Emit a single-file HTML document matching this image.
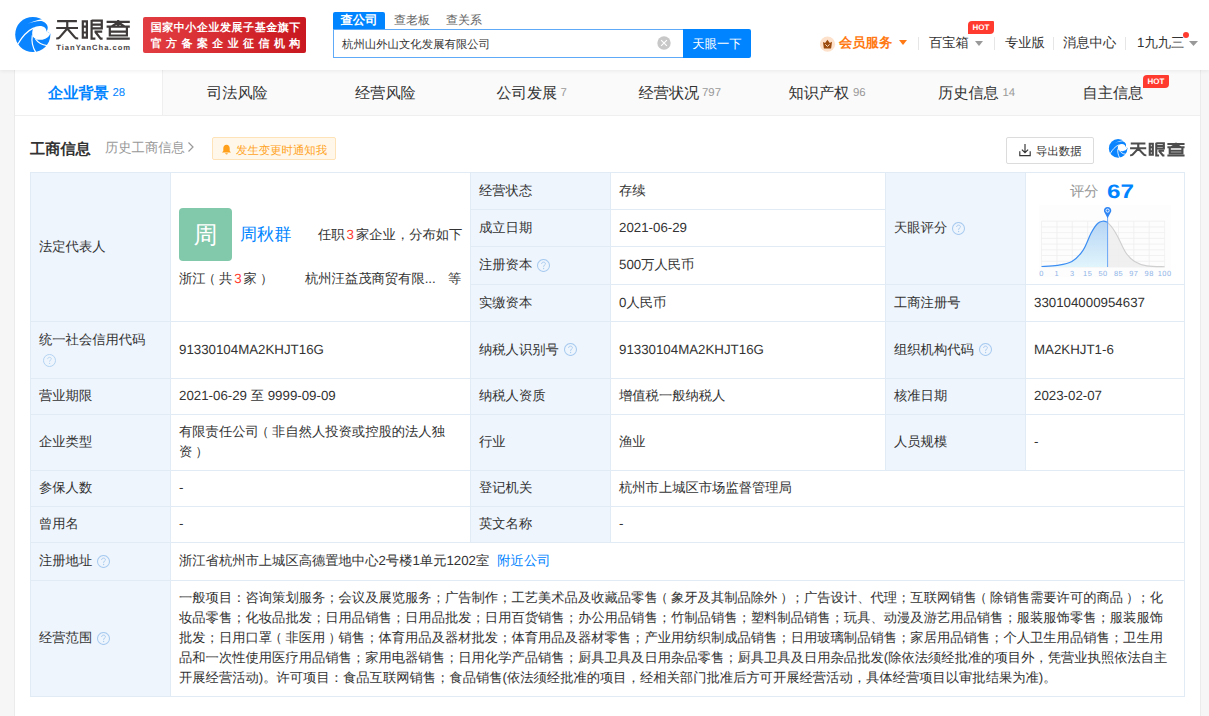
<!DOCTYPE html>
<html><head><meta charset="utf-8">
<style>
*{box-sizing:border-box;margin:0;padding:0}
html,body{text-rendering:geometricPrecision;width:1209px;height:716px;overflow:hidden;background:#f6f6f6;font-family:"Liberation Sans",sans-serif;color:#333}
.a{position:absolute;white-space:nowrap}
i{font-style:normal}
#hdr{position:absolute;z-index:10;left:0;top:0;width:1209px;height:70px;background:#fff;box-shadow:0 1px 4px rgba(0,0,0,0.07)}
#card{position:absolute;left:14px;top:70px;width:1187px;height:660px;background:#fff;border-left:1px solid #ebebeb;border-right:1px solid #ebebeb}
.tabs{position:absolute;left:15px;top:70px;width:1185px;height:46px;background:#fafafa;border-bottom:1px solid #efefef}
.tt{top:82.5px;font-size:15.2px;line-height:22px;color:#333}
.tn{top:85px;font-size:11.4px;line-height:16px;color:#999}
.hot{background:#ff3b30;border-radius:4px 1px 4px 0;color:#fff;font-size:8px;font-weight:bold;text-align:center}
.c{position:absolute;border:1px solid #e1ebf5;display:flex;align-items:center;font-size:13.3px;color:#333;padding-left:8px;padding-bottom:1px;line-height:20px}
.l{background:#eef5fd}
.qi{margin-left:5px;vertical-align:-2.5px}
.lp{position:relative;left:-3px}.rp{position:relative;left:3px}
</style></head><body>
<div id="hdr">
 <svg class="a" style="left:13px;top:15px" width="40" height="40" viewBox="0 0 40 40">
  <circle cx="19.8" cy="19.5" r="17.6" fill="#0a84ff"/>
  <path d="M28.9 4.3 L44 -4 L44 18.5 L37.3 18.5 L33.7 16.6 C35.4 13.5 35 10.3 32.6 8.3 C31 7 29.6 6.4 28.3 6.1 C23.5 5.9 18.5 7.5 14.2 8.9 C18.5 6.8 23.5 5.3 28.9 4.3 Z" fill="#fff"/>
  <path d="M20.5 12.9 C23.5 10.8 29.3 10.2 32.2 13 C33.1 14 33.5 15.4 33.7 16.6 L37.3 18.5 C35.8 22.5 32.2 24.6 27.8 24.8 C25.6 24.9 23.9 24.5 22.7 23.9 C20.7 22.8 19.3 21.2 19.2 19.2 C19.1 16.8 19.6 14.2 20.5 12.9 Z" fill="#fff"/>
  <path d="M4.8 29.2 C8.8 22.2 13.8 16.2 20.8 12.9" stroke="#fff" stroke-width="1.25" fill="none"/>
  <path d="M19.3 20.3 C18.5 25.2 19.4 32 22.9 37.6" stroke="#fff" stroke-width="1.2" fill="none"/>
  <path d="M22.5 24 C25 27.6 29 30 34 30.6" stroke="#fff" stroke-width="1.3" fill="none"/>
 </svg>
 <svg class="a" style="left:0;top:0" width="140" height="60" viewBox="0 0 140 60">
  <g stroke="#3e3a39" stroke-width="2.2" fill="none" stroke-linecap="butt">
   <path d="M57.1 21.1 H76.9 M56.2 28 H78 M67.25 20.2 V28.5 L59.6 37.4 Q58.8 38.5 56.2 38.5 M67.25 28.5 L74.9 37.4 Q75.7 38.5 78.2 38.5"/>
   <path d="M82.8 21.4 H86.9 V37.6 H82.8 Z M82.8 26.6 H86.9 M82.8 32.5 H86.9"/>
   <path d="M91.6 20 V38.6 H95.4 M91.6 20.6 H101.8 V28.4 H91.6 M91.6 24.6 H101.8 M94.5 31.6 H102.2 M95.3 31.8 L100.6 38.6 H102.6"/>
   <path d="M106.6 21.8 H129.8 M106.6 26.7 H129.8 M118.2 20 V26 M117.6 22.6 L111.3 26.6 M118.8 22.6 L124.8 26.6 M109.8 26.7 V35.5 H126.9 V26.7 M109.8 31.6 H126.9 M106.6 38.7 H129.8"/>
  </g>
  <text x="56.3" y="49.9" textLength="73.7" lengthAdjust="spacing" font-family="Liberation Sans" font-weight="bold" font-size="7.6" fill="#4a4545">TianYanCha.com</text>
 </svg>
 <div class="a" style="left:143px;top:17px;width:163px;height:36px;border-radius:2px;background:linear-gradient(90deg,#e23d42,#c9181f)"></div>
 <div class="a" style="left:150.7px;top:20px;font-size:11px;line-height:16px;font-weight:bold;color:#fff;letter-spacing:0.55px">国家中小企业发展子基金旗下</div>
 <div class="a" style="left:150.7px;top:35.7px;font-size:11px;line-height:16px;font-weight:bold;color:#fff;letter-spacing:4.4px">官方备案企业征信机构</div>

 <div class="a" style="left:333px;top:12px;width:52px;height:17px;background:#0084ff;border-radius:2px 2px 0 0;color:#fff;font-size:12.35px;font-weight:bold;line-height:17px;text-align:center">查公司</div>
 <div class="a" style="left:394px;top:12px;font-size:12px;line-height:17px;color:#666">查老板</div>
 <div class="a" style="left:446px;top:12px;font-size:12px;line-height:17px;color:#666">查关系</div>
 <div class="a" style="left:333px;top:29px;width:351px;height:29px;border:1px solid #5eaaf8;border-right:0;background:#fff"></div>
 <div class="a" style="left:342px;top:36px;font-size:11.4px;line-height:18px;color:#333">杭州山外山文化发展有限公司</div>
 <svg class="a" style="left:657px;top:36px" width="14" height="14" viewBox="0 0 14 14"><circle cx="7" cy="7" r="6.7" fill="#c8c8c8"/><path d="M4.1 4.1 L9.9 9.9 M9.9 4.1 L4.1 9.9" stroke="#fff" stroke-width="1.1"/></svg>
 <div class="a" style="left:683px;top:29px;width:68px;height:29px;background:#0084ff;border-radius:0 2px 2px 0;color:#fff;font-size:12.35px;line-height:31px;text-align:center">天眼一下</div>

 <svg class="a" style="left:820px;top:36px" width="16" height="16" viewBox="0 0 16 16"><circle cx="7.5" cy="8.2" r="7.6" fill="#fde1ca"/><path d="M3 5.9 L5.1 6.9 L7.4 3.7 L9.8 6.9 L12 5.8 L11.2 12.1 Q11.1 12.6 10.6 12.6 L4.4 12.6 Q3.9 12.6 3.8 12.1 Z" fill="#9a4a0c"/><path d="M5.4 8.3 L7.4 10.4 L9.6 8.4" stroke="#fde1ca" stroke-width="1" fill="none"/></svg>
 <div class="a" style="left:839px;top:34px;font-size:13.3px;line-height:18px;font-weight:bold;color:#ff7a14">会员服务</div>
 <svg class="a" style="left:899px;top:40px" width="8" height="6" viewBox="0 0 8 6"><path d="M0 0 L8 0 L4 5 Z" fill="#ff7a14"/></svg>
 <div class="a" style="left:918px;top:37px;width:1px;height:13px;background:#e6e6e6"></div>
 <div class="a" style="left:929px;top:34px;font-size:13.3px;line-height:18px;color:#333">百宝箱</div>
 <svg class="a" style="left:975px;top:41px" width="8" height="6" viewBox="0 0 8 6"><path d="M0 0 L8 0 L4 5 Z" fill="#999"/></svg>
 <div class="a hot" style="left:968px;top:21px;width:26px;height:13px;line-height:13px">HOT</div>
 <div class="a" style="left:994px;top:37px;width:1px;height:13px;background:#e6e6e6"></div>
 <div class="a" style="left:1005px;top:34px;font-size:13.3px;line-height:18px;color:#333">专业版</div>
 <div class="a" style="left:1053px;top:37px;width:1px;height:13px;background:#e6e6e6"></div>
 <div class="a" style="left:1063px;top:34px;font-size:13.3px;line-height:18px;color:#333">消息中心</div>
 <div class="a" style="left:1125px;top:37px;width:1px;height:13px;background:#e6e6e6"></div>
 <div class="a" style="left:1137px;top:34px;font-size:13.3px;line-height:18px;color:#333">1九九三</div>
 <div class="a" style="left:1183px;top:32px;width:6px;height:6px;border-radius:50%;background:#ff3b30"></div>
 <svg class="a" style="left:1189px;top:41px" width="9" height="6" viewBox="0 0 9 6"><path d="M0 0 L9 0 L4.5 5 Z" fill="#999"/></svg>
</div>
<div id="card"></div>
<div class="tabs"></div>
<div class="a" style="left:15px;top:70px;width:148px;height:45px;background:#fff;border-right:1px solid #efefef"></div>
<div class="a tt" style="left:48px;font-weight:bold;color:#0084ff">企业背景</div><div class="a tn" style="left:112.5px;color:#0084ff">28</div>
<div class="a tt" style="left:207px">司法风险</div>
<div class="a tt" style="left:355px">经营风险</div>
<div class="a tt" style="left:496.5px">公司发展</div><div class="a tn" style="left:560.5px">7</div>
<div class="a tt" style="left:638.5px">经营状况</div><div class="a tn" style="left:702px">797</div>
<div class="a tt" style="left:788.5px">知识产权</div><div class="a tn" style="left:853px">96</div>
<div class="a tt" style="left:938px">历史信息</div><div class="a tn" style="left:1002.5px">14</div>
<div class="a tt" style="left:1082.5px">自主信息</div>
<div class="a hot" style="left:1143px;top:75px;width:26px;height:13px;line-height:13px">HOT</div>


<!-- TABLE -->
<div class="a" style="left:30px;top:139px;font-size:15.2px;line-height:22px;font-weight:bold;color:#333">工商信息</div>
<div class="a" style="left:105px;top:138px;font-size:13.3px;line-height:20px;color:#999">历史工商信息<svg width="8" height="12" viewBox="0 0 8 12" style="margin-left:2px;vertical-align:-1px"><path d="M1.5 1.5 L6 6 L1.5 10.5" stroke="#999" stroke-width="1.2" fill="none"/></svg></div>
<div class="a" style="left:212px;top:137px;width:124px;height:23px;background:#fff8ea;border:1px solid #ffe3b8;border-radius:2px"></div>
<svg class="a" style="left:221px;top:144px" width="11" height="11" viewBox="0 0 11 11"><path d="M5.5 0.8 C3.2 0.8 2.3 2.6 2.3 4.5 L2.3 7 L1 8.4 L10 8.4 L8.7 7 L8.7 4.5 C8.7 2.6 7.8 0.8 5.5 0.8 Z M4.2 9.2 C4.3 10 4.8 10.4 5.5 10.4 C6.2 10.4 6.7 10 6.8 9.2 Z" fill="#ff9f1a"/></svg>
<div class="a" style="left:236px;top:142px;font-size:11.4px;line-height:18px;color:#ffa31f">发生变更时通知我</div>
<div class="a" style="left:1006px;top:137px;width:88px;height:27px;border:1px solid #dcdcdc;border-radius:2px;background:#fff"></div>
<svg class="a" style="left:1018px;top:143px" width="14" height="14" viewBox="0 0 14 14"><path d="M7 1 V9.6 M3.9 6.6 L7 9.7 L10.1 6.6 M1.8 8.2 V12.6 H12.2 V8.2" stroke="#333" stroke-width="1.15" fill="none"/></svg>
<div class="a" style="left:1036px;top:142.5px;font-size:11.4px;line-height:18px;color:#333">导出数据</div>
<svg class="a" style="left:1105px;top:136px" width="85" height="26" viewBox="0 0 85 26">
 <g transform="translate(2.7,2.1) scale(0.528)"><circle cx="19.8" cy="19.5" r="17.6" fill="#0a84ff"/>
  <path d="M28.9 4.3 L44 -4 L44 18.5 L37.3 18.5 L33.7 16.6 C35.4 13.5 35 10.3 32.6 8.3 C31 7 29.6 6.4 28.3 6.1 C23.5 5.9 18.5 7.5 14.2 8.9 C18.5 6.8 23.5 5.3 28.9 4.3 Z" fill="#fff"/>
  <path d="M20.5 12.9 C23.5 10.8 29.3 10.2 32.2 13 C33.1 14 33.5 15.4 33.7 16.6 L37.3 18.5 C35.8 22.5 32.2 24.6 27.8 24.8 C25.6 24.9 23.9 24.5 22.7 23.9 C20.7 22.8 19.3 21.2 19.2 19.2 C19.1 16.8 19.6 14.2 20.5 12.9 Z" fill="#fff"/>
  <path d="M4.8 29.2 C8.8 22.2 13.8 16.2 20.8 12.9" stroke="#fff" stroke-width="1.6" fill="none"/>
  <path d="M19.3 20.3 C18.5 25.2 19.4 32 22.9 37.6" stroke="#fff" stroke-width="1.6" fill="none"/>
  <path d="M22.5 24 C25 27.6 29 30 34 30.6" stroke="#fff" stroke-width="1.6" fill="none"/></g>
 <g transform="translate(-16.5,-6.8) scale(0.74,0.68)" stroke="#4d4d4d" stroke-width="2.9" fill="none">
   <path d="M57.1 21.1 H76.9 M56.2 28 H78 M67.25 20.2 V28.5 L59.6 37.4 Q58.8 38.5 56.2 38.5 M67.25 28.5 L74.9 37.4 Q75.7 38.5 78.2 38.5"/>
   <path d="M82.8 21.4 H86.9 V37.6 H82.8 Z M82.8 26.6 H86.9 M82.8 32.5 H86.9"/>
   <path d="M91.6 20 V38.6 H95.4 M91.6 20.6 H101.8 V28.4 H91.6 M91.6 24.6 H101.8 M94.5 31.6 H102.2 M95.3 31.8 L100.6 38.6 H102.6"/>
   <path d="M106.6 21.8 H129.8 M106.6 26.7 H129.8 M118.2 20 V26 M117.6 22.6 L111.3 26.6 M118.8 22.6 L124.8 26.6 M109.8 26.7 V35.5 H126.9 V26.7 M109.8 31.6 H126.9 M106.6 38.7 H129.8"/>
 </g>
</svg>
<div id="tbl">
<div class="c l" style="left:30px;top:172px;width:141px;height:150px;">法定代表人</div>
<div class="c" style="left:170px;top:172px;width:301px;height:150px;"></div>
<div class="c l" style="left:470px;top:172px;width:141px;height:38px;">经营状态</div>
<div class="c" style="left:610px;top:172px;width:276px;height:38px;">存续</div>
<div class="c l" style="left:470px;top:209px;width:141px;height:38px;">成立日期</div>
<div class="c" style="left:610px;top:209px;width:276px;height:38px;">2021-06-29</div>
<div class="c l" style="left:470px;top:246px;width:141px;height:39px;">注册资本<svg class="qi" width="13" height="13" viewBox="0 0 13 13"><circle cx="6.5" cy="6.5" r="6" fill="none" stroke="#a9cbef" stroke-width="1.05"/><path d="M4.6 5 C4.6 3.8 5.4 3.1 6.5 3.1 C7.6 3.1 8.4 3.8 8.4 4.8 C8.4 6 6.6 6.2 6.6 7.8" fill="none" stroke="#a9cbef" stroke-width="1"/><circle cx="6.6" cy="9.5" r="0.65" fill="#a9cbef"/></svg></div>
<div class="c" style="left:610px;top:246px;width:276px;height:39px;">500万人民币</div>
<div class="c l" style="left:470px;top:284px;width:141px;height:38px;">实缴资本</div>
<div class="c" style="left:610px;top:284px;width:276px;height:38px;">0人民币</div>
<div class="c l" style="left:885px;top:172px;width:141px;height:113px;">天眼评分<svg class="qi" width="13" height="13" viewBox="0 0 13 13"><circle cx="6.5" cy="6.5" r="6" fill="none" stroke="#a9cbef" stroke-width="1.05"/><path d="M4.6 5 C4.6 3.8 5.4 3.1 6.5 3.1 C7.6 3.1 8.4 3.8 8.4 4.8 C8.4 6 6.6 6.2 6.6 7.8" fill="none" stroke="#a9cbef" stroke-width="1"/><circle cx="6.6" cy="9.5" r="0.65" fill="#a9cbef"/></svg></div>
<div class="c" style="left:1025px;top:172px;width:160px;height:113px;"></div>
<div class="c l" style="left:885px;top:284px;width:141px;height:38px;">工商注册号</div>
<div class="c" style="left:1025px;top:284px;width:160px;height:38px;">330104000954637</div>
<div class="c l" style="left:30px;top:321px;width:141px;height:58px;"><div style="line-height:20px;margin-top:0">统一社会信用代码<br><svg class="qi" style="margin-left:4px;vertical-align:-3px" width="13" height="13" viewBox="0 0 13 13"><circle cx="6.5" cy="6.5" r="6" fill="none" stroke="#b3d2f0" stroke-width="1"/><path d="M4.7 5.1 C4.7 3.9 5.5 3.3 6.5 3.3 C7.5 3.3 8.3 3.9 8.3 4.9 C8.3 6 6.6 6.2 6.6 7.6" fill="none" stroke="#b3d2f0" stroke-width="0.9"/><circle cx="6.6" cy="9.3" r="0.6" fill="#b3d2f0"/></svg></div></div>
<div class="c" style="left:170px;top:321px;width:301px;height:58px;">91330104MA2KHJT16G</div>
<div class="c l" style="left:470px;top:321px;width:141px;height:58px;">纳税人识别号<svg class="qi" width="13" height="13" viewBox="0 0 13 13"><circle cx="6.5" cy="6.5" r="6" fill="none" stroke="#a9cbef" stroke-width="1.05"/><path d="M4.6 5 C4.6 3.8 5.4 3.1 6.5 3.1 C7.6 3.1 8.4 3.8 8.4 4.8 C8.4 6 6.6 6.2 6.6 7.8" fill="none" stroke="#a9cbef" stroke-width="1"/><circle cx="6.6" cy="9.5" r="0.65" fill="#a9cbef"/></svg></div>
<div class="c" style="left:610px;top:321px;width:276px;height:58px;">91330104MA2KHJT16G</div>
<div class="c l" style="left:885px;top:321px;width:141px;height:58px;">组织机构代码<svg class="qi" width="13" height="13" viewBox="0 0 13 13"><circle cx="6.5" cy="6.5" r="6" fill="none" stroke="#a9cbef" stroke-width="1.05"/><path d="M4.6 5 C4.6 3.8 5.4 3.1 6.5 3.1 C7.6 3.1 8.4 3.8 8.4 4.8 C8.4 6 6.6 6.2 6.6 7.8" fill="none" stroke="#a9cbef" stroke-width="1"/><circle cx="6.6" cy="9.5" r="0.65" fill="#a9cbef"/></svg></div>
<div class="c" style="left:1025px;top:321px;width:160px;height:58px;">MA2KHJT1-6</div>
<div class="c l" style="left:30px;top:378px;width:141px;height:37px;">营业期限</div>
<div class="c" style="left:170px;top:378px;width:301px;height:37px;">2021-06-29 至 9999-09-09</div>
<div class="c l" style="left:470px;top:378px;width:141px;height:37px;">纳税人资质</div>
<div class="c" style="left:610px;top:378px;width:276px;height:37px;">增值税一般纳税人</div>
<div class="c l" style="left:885px;top:378px;width:141px;height:37px;">核准日期</div>
<div class="c" style="left:1025px;top:378px;width:160px;height:37px;">2023-02-07</div>
<div class="c l" style="left:30px;top:414px;width:141px;height:57px;">企业类型</div>
<div class="c" style="left:170px;top:414px;width:301px;height:57px;"><div>有限责任公司<i class="lp">（</i>非自然人投资或控股的法人独<br>资<i class="rp">）</i></div></div>
<div class="c l" style="left:470px;top:414px;width:141px;height:57px;">行业</div>
<div class="c" style="left:610px;top:414px;width:276px;height:57px;">渔业</div>
<div class="c l" style="left:885px;top:414px;width:141px;height:57px;">人员规模</div>
<div class="c" style="left:1025px;top:414px;width:160px;height:57px;">-</div>
<div class="c l" style="left:30px;top:470px;width:141px;height:37px;">参保人数</div>
<div class="c" style="left:170px;top:470px;width:301px;height:37px;">-</div>
<div class="c l" style="left:470px;top:470px;width:141px;height:37px;">登记机关</div>
<div class="c" style="left:610px;top:470px;width:575px;height:37px;">杭州市上城区市场监督管理局</div>
<div class="c l" style="left:30px;top:506px;width:141px;height:37px;">曾用名</div>
<div class="c" style="left:170px;top:506px;width:301px;height:37px;">-</div>
<div class="c l" style="left:470px;top:506px;width:141px;height:37px;">英文名称</div>
<div class="c" style="left:610px;top:506px;width:575px;height:37px;">-</div>
<div class="c l" style="left:30px;top:542px;width:141px;height:39px;">注册地址<svg class="qi" width="13" height="13" viewBox="0 0 13 13"><circle cx="6.5" cy="6.5" r="6" fill="none" stroke="#a9cbef" stroke-width="1.05"/><path d="M4.6 5 C4.6 3.8 5.4 3.1 6.5 3.1 C7.6 3.1 8.4 3.8 8.4 4.8 C8.4 6 6.6 6.2 6.6 7.8" fill="none" stroke="#a9cbef" stroke-width="1"/><circle cx="6.6" cy="9.5" r="0.65" fill="#a9cbef"/></svg></div>
<div class="c" style="left:170px;top:542px;width:1015px;height:39px;">浙江省杭州市上城区高德置地中心2号楼1单元1202室<span style="color:#0084ff;margin-left:8px">附近公司</span></div>
<div class="c l" style="left:30px;top:580px;width:141px;height:117px;">经营范围<svg class="qi" width="13" height="13" viewBox="0 0 13 13"><circle cx="6.5" cy="6.5" r="6" fill="none" stroke="#a9cbef" stroke-width="1.05"/><path d="M4.6 5 C4.6 3.8 5.4 3.1 6.5 3.1 C7.6 3.1 8.4 3.8 8.4 4.8 C8.4 6 6.6 6.2 6.6 7.8" fill="none" stroke="#a9cbef" stroke-width="1"/><circle cx="6.6" cy="9.5" r="0.65" fill="#a9cbef"/></svg></div>
<div class="c" style="left:170px;top:580px;width:1015px;height:117px;"><div>一般项目：咨询策划服务；会议及展览服务；广告制作；工艺美术品及收藏品零售<i class="lp">（</i>象牙及其制品除外<i class="rp">）</i>；广告设计、代理；互联网销售<i class="lp">（</i>除销售需要许可的商品<i class="rp">）</i>；化<br>妆品零售；化妆品批发；日用品销售；日用品批发；日用百货销售；办公用品销售；竹制品销售；塑料制品销售；玩具、动漫及游艺用品销售；服装服饰零售；服装服饰<br>批发；日用口罩<i class="lp">（</i>非医用<i class="rp">）</i>销售；体育用品及器材批发；体育用品及器材零售；产业用纺织制成品销售；日用玻璃制品销售；家居用品销售；个人卫生用品销售；卫生用<br>品和一次性使用医疗用品销售；家用电器销售；日用化学产品销售；厨具卫具及日用杂品零售；厨具卫具及日用杂品批发(除依法须经批准的项目外，凭营业执照依法自主<br>开展经营活动)。许可项目：食品互联网销售；食品销售(依法须经批准的项目，经相关部门批准后方可开展经营活动，具体经营项目以审批结果为准)。</div></div>
</div>
<svg class="a" style="left:1030px;top:175px" width="150" height="110" viewBox="1030 175 150 110">
 <defs><linearGradient id="bg1" x1="0" y1="0" x2="0" y2="1"><stop offset="0" stop-color="#aed0f4"/><stop offset="1" stop-color="#def4fc"/></linearGradient></defs>
 <rect x="1039" y="205" width="132" height="72" fill="#fdfdfd"/>
 <path d="M1041.5 221.2 V267 M1056.9 221.2 V267 M1072.3 221.2 V267 M1087.7 221.2 V267 M1103.1 221.2 V267 M1118.5 221.2 V267 M1133.8 221.2 V267 M1149.2 221.2 V267 M1164.6 221.2 V267 M1041.5 221.2 H1164.6 M1041.5 226.9 H1164.6 M1041.5 232.6 H1164.6 M1041.5 238.4 H1164.6 M1041.5 244.1 H1164.6 M1041.5 249.8 H1164.6 M1041.5 255.5 H1164.6 M1041.5 261.3 H1164.6 M1041.5 267.0 H1164.6 " stroke="#efefef" stroke-width="0.8" fill="none"/>
 <path d="M1107.6 222.3 C1108.4 223.2 1110.8 225.6 1112.5 228.0 C1114.2 230.4 1115.7 232.8 1117.9 236.9 C1120.1 241.0 1122.9 248.4 1125.7 252.5 C1128.5 256.6 1131.1 259.3 1134.6 261.5 C1138.1 263.7 1141.9 265.0 1146.9 265.9 C1151.9 266.8 1161.6 266.6 1164.6 266.7 L1164.6 267 L1107.6 267 Z" fill="#eeeeee" opacity="0.9"/>
 <path d="M1107.6 222.3 C1108.4 223.2 1110.8 225.6 1112.5 228.0 C1114.2 230.4 1115.7 232.8 1117.9 236.9 C1120.1 241.0 1122.9 248.4 1125.7 252.5 C1128.5 256.6 1131.1 259.3 1134.6 261.5 C1138.1 263.7 1141.9 265.0 1146.9 265.9 C1151.9 266.8 1161.6 266.6 1164.6 266.7" stroke="#cfcfcf" stroke-width="1.1" fill="none"/>
 <path d="M1041.5 266.5 C1044.1 266.3 1052.2 266.2 1057.3 265.4 C1062.4 264.6 1067.6 264.0 1071.9 261.5 C1076.2 259.0 1079.8 255.0 1083.0 250.3 C1086.2 245.6 1088.5 238.0 1090.9 233.5 C1093.3 229.0 1095.5 225.6 1097.6 223.5 C1099.6 221.4 1101.5 221.4 1103.2 221.2 C1104.9 221.0 1106.9 222.1 1107.6 222.3 L1107.6 267 L1041.5 267 Z" fill="url(#bg1)" opacity="0.9"/>
 <path d="M1041.5 266.5 C1044.1 266.3 1052.2 266.2 1057.3 265.4 C1062.4 264.6 1067.6 264.0 1071.9 261.5 C1076.2 259.0 1079.8 255.0 1083.0 250.3 C1086.2 245.6 1088.5 238.0 1090.9 233.5 C1093.3 229.0 1095.5 225.6 1097.6 223.5 C1099.6 221.4 1101.5 221.4 1103.2 221.2 C1104.9 221.0 1106.9 222.1 1107.6 222.3" stroke="#3d8ef2" stroke-width="1.2" fill="none"/>
 <path d="M1107.6 217 V267" stroke="#5b9ef5" stroke-width="0.9"/>
 <path d="M1104 211.5 A3.7 3.7 0 1 1 1111.2 211.5 L1107.6 218.3 Z" fill="#2f86f5"/>
 <circle cx="1107.6" cy="210.6" r="1.6" fill="none" stroke="#fff" stroke-width="0.9"/>
 <g font-family="Liberation Sans" font-size="7.4" fill="#8fb4e8" letter-spacing="0.5"><text x="1041.5" y="275.6" text-anchor="middle">0</text><text x="1056.9" y="275.6" text-anchor="middle">1</text><text x="1072.3" y="275.6" text-anchor="middle">3</text><text x="1087.7" y="275.6" text-anchor="middle">15</text><text x="1103.1" y="275.6" text-anchor="middle">50</text><text x="1118.5" y="275.6" text-anchor="middle">85</text><text x="1133.8" y="275.6" text-anchor="middle">97</text><text x="1149.2" y="275.6" text-anchor="middle">98</text><text x="1164.6" y="275.6" text-anchor="middle">100</text></g>
</svg>
<div class="a" style="left:1070px;top:182px;font-size:14.25px;line-height:20px;color:#999">评分</div>
<div class="a" style="left:1106.5px;top:180px;font-size:19.5px;line-height:24px;color:#0084ff;font-weight:bold;transform:scaleX(1.24);transform-origin:0 0">67</div>
<div class="a" style="left:179px;top:208px;width:53px;height:53px;border-radius:4px;background:#82c8ab;color:#fff;font-size:24px;line-height:56px;text-align:center">周</div>
<div class="a" style="left:240px;top:223.5px;font-size:17.1px;line-height:22px;color:#0084ff">周秋群</div>
<div class="a" style="left:318px;top:225px;font-size:13.3px;line-height:20px;color:#333">任职<span style="color:#ff3b30;margin:0 2px">3</span>家企业，分布如下</div>
<div class="a" style="left:179px;top:269px;font-size:13.3px;line-height:20px;color:#333">浙江<i class="lp">（</i>共<span style="color:#ff3b30;margin:0 2px">3</span>家<i class="rp">）</i></div>
<div class="a" style="left:305px;top:269px;font-size:13.3px;line-height:20px;color:#333">杭州汪益茂商贸有限...</div>
<div class="a" style="left:448px;top:269px;font-size:13.3px;line-height:20px;color:#333">等</div>
</body></html>
